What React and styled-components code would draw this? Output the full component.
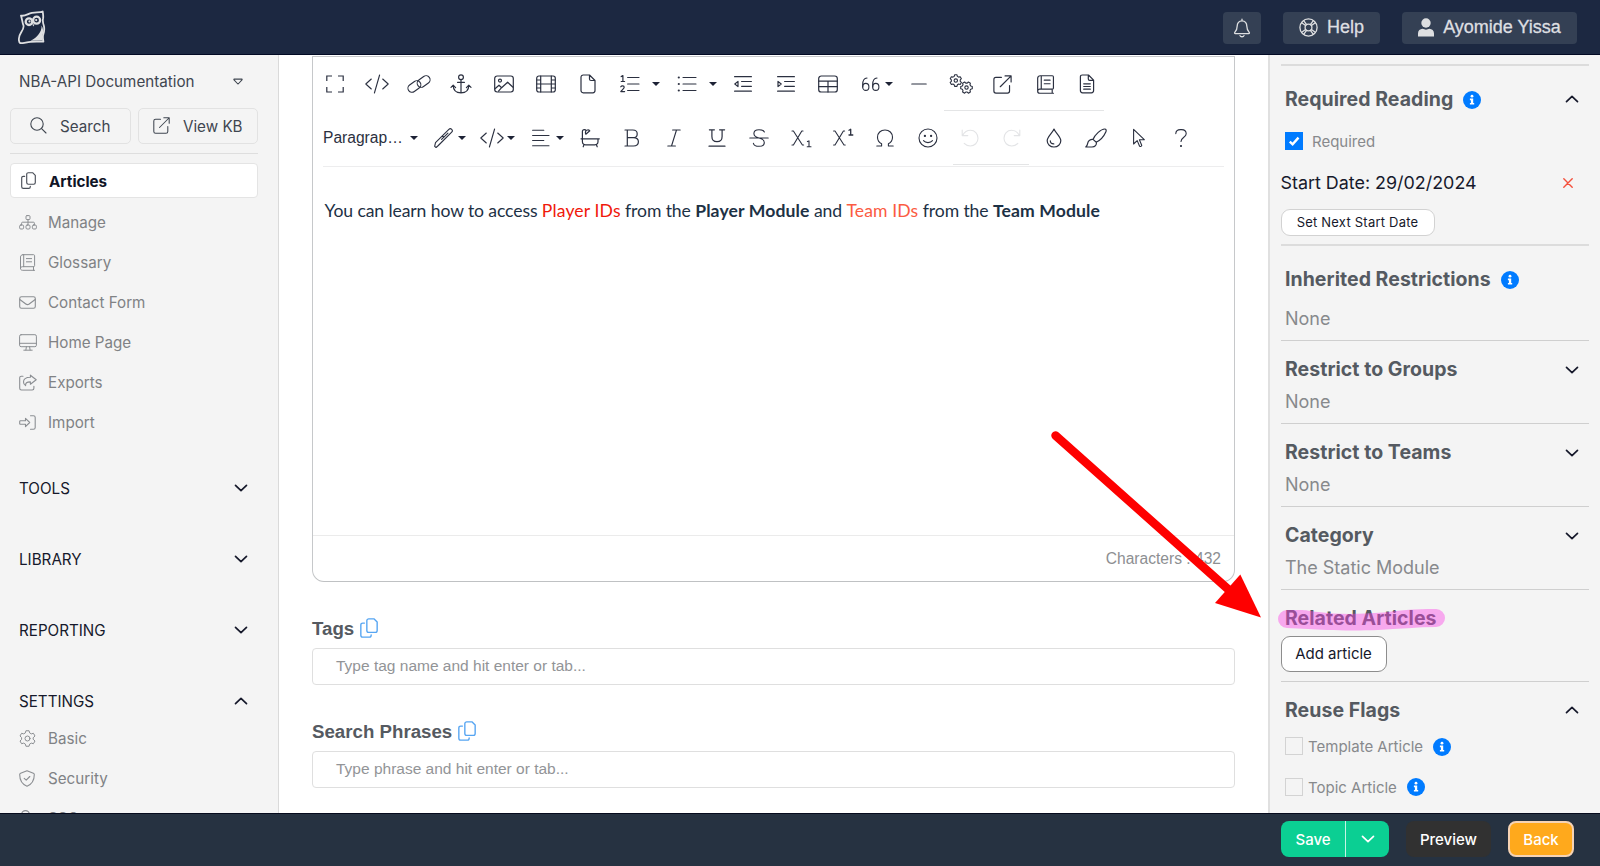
import React from 'react';
import styled, { createGlobalStyle, css } from 'styled-components';

const sans = `Inter, "Liberation Sans", sans-serif`;
const helv = `"Liberation Sans", Arial, sans-serif`;

const GlobalStyle = createGlobalStyle`
  *, *::before, *::after { box-sizing: border-box; }
  html, body { margin: 0; padding: 0; }
  body { font-family: ${sans}; background: #fff; overflow: hidden; }
  button, input { font: inherit; margin: 0; }
  svg { display: block; flex: none; }
`;

/* ---------- icons ---------- */

const Glyph = styled.svg.attrs((p) => ({
  width: p.$w,
  height: p.$h ?? p.$w,
  viewBox: p.viewBox ?? `0 0 ${p.$w} ${p.$h ?? p.$w}`,
  fill: 'none',
  stroke: 'currentColor',
  strokeWidth: p.$sw ?? 1.2,
  strokeLinecap: 'round',
  strokeLinejoin: 'round',
}))``;

function gearPath(cx, cy, outer, inner, offset = 0) {
  const points = [];
  for (let i = 0; i < 6; i += 1) {
    const base = (i * Math.PI) / 3 + offset;
    [[-0.36, inner], [-0.2, outer], [0.2, outer], [0.36, inner]].forEach(([a, r]) => {
      points.push(`${(cx + r * Math.cos(base + a)).toFixed(2)} ${(cy + r * Math.sin(base + a)).toFixed(2)}`);
    });
  }
  return `M${points.join('L')}Z`;
}

const Owl = () => (
  <Glyph $w={28} $h={35} $sw={1.8}>
    <path d="M3 5.600C7.500 6.600 9.600 3.600 14 2.800C18.500 2 21.600 3 24.700 1.500C25 4 25.600 6.200 25 8.800C24.400 11 25 13 25.800 15.500C26.600 18.500 26.400 21.500 25 25.500C24.600 28 25.200 30 25.400 31.600C21 31.800 16 31.600 12.500 31.800C8.500 32.200 5 33.400 2.400 33.200C-.2 31.500.8 26 3.200 22.300C5 19.500 6.300 17.500 5.400 15.200C4.200 12.600 4.200 9 3 5.600Z" />
    <circle cx="11" cy="11.700" r="3.300" strokeWidth="2.300" />
    <circle cx="18.600" cy="10.200" r="3.500" strokeWidth="2.300" />
    <circle cx="11.500" cy="11.400" r="1.100" fill="currentColor" stroke="none" />
    <circle cx="18.200" cy="10.100" r="1.100" fill="currentColor" stroke="none" />
    <path d="M14.200 14.500L15.700 16.500L16.400 14.200Z" fill="currentColor" stroke="none" />
    <path d="M23.500 15.500C24 22 19 27.500 12.500 30.700L24.800 30.600L24.300 26.500C25.800 22 25.300 18.500 23.500 15.500Z" fill="currentColor" stroke="none" />
  </Glyph>
);

const BellIcon = () => (
  <Glyph $w={18} $h={20} $sw={1.3}>
    <path d="M9 1.200V2.800M9 2.800C5.900 2.800 4.200 5.200 4.200 8C4.200 11.500 3.300 12.700 1.800 14.400C1.300 15 1.600 15.700 2.400 15.700H15.600C16.400 15.700 16.700 15 16.200 14.400C14.700 12.700 13.800 11.500 13.800 8C13.800 5.200 12.100 2.800 9 2.800ZM7 17.600C7.500 19.100 10.500 19.100 11 17.600" />
  </Glyph>
);
const HelpRingIcon = () => (
  <Glyph $w={19} $sw={1.3}>
    <circle cx="9.500" cy="9.500" r="8.600" />
    <circle cx="9.500" cy="9.500" r="3.400" />
    <path d="M2.700 4.700L6.600 7.600M4.700 2.700L7.600 6.600M14.300 2.700L11.400 6.600M16.300 4.700L12.400 7.600M16.300 14.300L12.400 11.400M14.300 16.300L11.400 12.400M4.700 16.300L7.600 12.400M2.700 14.300L6.600 11.400" />
  </Glyph>
);
const UserIcon = () => (
  <Glyph $w={16} $h={19}>
    <g fill="currentColor" stroke="none">
      <circle cx="8" cy="5" r="4.700" />
      <path d="M0 18.500V15.500C0 12.500 2 11 4.600 10.800C6.800 11.900 9.200 11.900 11.400 10.800C14 11 16 12.500 16 15.500V18.500Z" />
    </g>
  </Glyph>
);
const TriangleIcon = () => (
  <Glyph $w={10} $h={7} $sw={1.100}>
    <path d="M1.100 1.100H8.900C9.200 1.100 9.200 1.500 9 1.800L5.600 5.500C5.200 5.900 4.800 5.900 4.400 5.500L1 1.800C.8 1.500.8 1.100 1.100 1.100Z" />
  </Glyph>
);
const SearchIcon = () => (
  <Glyph $w={17} $sw={1.100}>
    <circle cx="7" cy="7" r="6.200" />
    <path d="M11.600 11.600L16 16" />
  </Glyph>
);
const ExternalIcon = ({ size = 17 }) => (
  <Glyph $w={size} $sw={1.050} viewBox="0 0 17 17">
    <path d="M7.500 2.200H2.600C1.600 2.200.8 3 .8 4V14.400C.8 15.400 1.600 16.200 2.600 16.200H13C14 16.200 14.800 15.400 14.800 14.400V9.500M10.800.8H16.200V6.200M16 1L6.500 10.500" />
  </Glyph>
);
const CopyIcon = ({ w = 15, h = 17 }) => (
  <Glyph $w={w} $h={h} $sw={1.150} viewBox="0 0 15 17" preserveAspectRatio="none">
    <path d="M7.300.7H11.600L14.300 3.400V10.600C14.300 11.500 13.700 12.200 12.800 12.200H7.300C6.400 12.200 5.700 11.500 5.700 10.600V2.300C5.700 1.400 6.400.7 7.300.7ZM3.700 4.300H2.300C1.400 4.300.7 5 .7 5.900V14.700C.7 15.600 1.400 16.300 2.300 16.300H7.800C8.700 16.300 9.300 15.600 9.300 14.700V14.300" />
  </Glyph>
);
const SitemapIcon = () => (
  <Glyph $w={18} $h={15} $sw={1}>
    <rect x="7" y=".6" width="4" height="4" rx="1" />
    <rect x=".6" y="10" width="4" height="4" rx="1.200" />
    <rect x="7" y="10" width="4" height="4" rx="1.200" />
    <rect x="13.400" y="10" width="4" height="4" rx="1.200" />
    <path d="M9 4.600V10M2.600 10V8.200Q2.600 7.200 3.600 7.200H14.400Q15.400 7.200 15.400 8.200V10" />
  </Glyph>
);
const BookIcon = ({ size = 17, sw = 1 }) => (
  <Glyph $w={size} $sw={sw} viewBox="0 0 17 17">
    <path d="M3.800.7H14.600C15.200.7 15.600 1.100 15.600 1.700V11.700C15.600 12.300 15.200 12.700 14.600 12.700H3.400C2.300 12.700 1.500 13.500 1.500 14.500C1.500 15.500 2.300 16.300 3.400 16.300H15.600M1.500 14.500V3C1.500 1.700 2.500.7 3.800.7M4.700.7V12.700M14.500 12.700V16.300M7.400 4.600H12.600M7.400 7.800H12.600" />
  </Glyph>
);
const MailIcon = () => (
  <Glyph $w={17} $h={13} $sw={1.100}>
    <rect x=".7" y=".7" width="15.600" height="11.600" rx="1.800" />
    <path d="M.8 3.500L6.800 8C7.900 8.800 9.100 8.800 10.200 8L16.200 3.500" />
  </Glyph>
);
const DesktopIcon = () => (
  <Glyph $w={18} $h={17} $sw={1}>
    <rect x=".6" y=".7" width="16.800" height="12" rx="1.500" />
    <path d="M.6 9.300H17.400M7.400 12.700L6.900 16M10.600 12.700L11.100 16M4.800 16.200H13.200" />
  </Glyph>
);
const ExportIcon = () => (
  <Glyph $w={18} $h={17} $sw={1.100}>
    <path d="M4 2.200H2.400C1.400 2.200.7 2.900.7 3.900V14.300C.7 15.300 1.400 16 2.400 16H13.200C14.200 16 14.900 15.300 14.900 14.300V12.200M11.400 1.200V3.300C6.500 3.300 4.500 5.300 4.500 7.900C4.500 9.500 5.400 10.800 6.600 11.600C6.400 9 7.600 7.900 11.400 7.900V10.200L17.200 5.700L11.400 1.200" />
  </Glyph>
);
const ImportIcon = () => (
  <Glyph $w={17} $h={15} $sw={1.100}>
    <path d="M11.500.8H14.400C15.500.8 16.200 1.500 16.200 2.600V12.400C16.200 13.500 15.500 14.200 14.400 14.200H11.500M6.500 3.300L10.700 7.500L6.500 11.700V9.200H1.500C1 9.200.7 8.900.7 8.400V6.600C.7 6.100 1 5.800 1.500 5.800H6.500Z" />
  </Glyph>
);
const GearIcon = () => (
  <Glyph $w={17} $sw={1}>
    <path d={gearPath(8.500, 8.500, 7.900, 6, Math.PI / 6)} />
    <circle cx="8.500" cy="8.500" r="2.500" />
  </Glyph>
);
const ShieldIcon = () => (
  <Glyph $w={16} $h={17} $sw={1.100}>
    <path d="M8 .7L14.400 3.200C15 3.500 15.300 4 15.300 4.500C15.300 10 13 14.200 8 16.200C3 14.200.7 10 .7 4.500C.7 4 1 3.500 1.600 3.200ZM5.200 8.300L7.200 10.200L10.800 6.500" />
  </Glyph>
);
const KeyIcon = () => (
  <Glyph $w={16} $sw={1.100}>
    <circle cx="6.500" cy="4.500" r="3.900" />
    <path d="M6.500 8.400V15.500M6.500 13H10" />
  </Glyph>
);
const Chevron = ({ up }) => (
  <Glyph $w={14} $h={8} $sw={1.7}>
    <path d={up ? 'M1.500 6.700L7 1.300L12.500 6.700' : 'M1.500 1.300L7 6.700L12.500 1.300'} />
  </Glyph>
);
const InfoIcon = () => (
  <Glyph $w={18}>
    <circle cx="9" cy="9" r="9" fill="#007bff" stroke="none" />
    <g fill="#fff" stroke="none">
      <circle cx="9" cy="5.200" r="1.400" />
      <path d="M6.900 7.600H10.200V12H11.200V13.600H6.900V12H7.900V9.200H6.900Z" />
    </g>
  </Glyph>
);
const CloseIcon = () => (
  <Glyph $w={10} $sw={1.400}>
    <path d="M.8.8L9.200 9.200M9.200.8L.8 9.200" />
  </Glyph>
);
const CheckIcon = () => (
  <Glyph $w={18} $sw={2.400}>
    <path d="M4.800 9.600L7.600 12.300L13.500 5.600" strokeLinecap="butt" strokeLinejoin="miter" />
  </Glyph>
);

/* toolbar icons share a 24x20 box centred in the tool cell */
const T = ({ children, sw = 1.100 }) => (
  <Glyph $w={24} $h={20} $sw={sw}>{children}</Glyph>
);
const toolIcons = {
  expand: <T sw={1.200}><path d="M3.800 7V2H9M15 2H20.200V7M20.200 13V18H15M9 18H3.800V13" strokeLinejoin="miter" strokeLinecap="butt" /></T>,
  code: <T><path d="M6.300 5L.8 10L6.300 15M17.700 5L23.200 10L17.700 15M14.600 1L9.400 19" /></T>,
  link: <T><g transform="rotate(-36 12 10)"><rect x="-.2" y="5.300" width="14" height="8" rx="4" /><rect x="10.200" y="6.700" width="14" height="8" rx="4" /></g></T>,
  anchor: <T sw={1.200}><circle cx="12" cy="3.200" r="2.400" /><path d="M12 5.600V18.800M8.600 8.400H15.400M2 13.400L4.200 11.200L6.600 13.600M22 13.400L19.800 11.200L17.400 13.600M4.200 11.500C4.300 16.300 7.200 18.800 12 18.800C16.800 18.800 19.700 16.300 19.800 11.500" /></T>,
  image: <T sw={1.200}><rect x="2.700" y="2" width="18.600" height="16" rx="2.400" /><circle cx="8" cy="6.600" r="1.500" /><path d="M3 14.800L7 11.200L9.600 13.700L15.600 8.200L21 13.200M9.600 13.700L6.500 17.200" /></T>,
  video: <T sw={1.200}><rect x="2.700" y="2" width="18.600" height="16" rx="2.200" /><path d="M6.700 2V18M17.300 2V18M6.700 10H17.300M2.700 6H6.700M2.700 10H6.700M2.700 14H6.700M17.300 6H21.300M17.300 10H21.300M17.300 14H21.300" /></T>,
  file: <T sw={1.200}><path d="M7.200 1H13.500L19 6.500V16.600C19 17.900 18.100 18.800 16.800 18.800H7.200C5.900 18.800 5 17.900 5 16.600V3.200C5 1.900 5.900 1 7.200 1ZM13.500 1V5Q13.500 6.500 15 6.500H19" /></T>,
  ol: <T><path d="M9.600 3.500H21M9.600 10H21M9.600 16.500H21" /><path d="M3.200 2.600L4.900 1.600V7.500M3.200 7.500H6.600M2.800 12.800C3.400 11.700 6.200 11.500 6.200 13.300C6.200 14.600 4 16 2.800 17.600H6.600" strokeWidth="1.200" /></T>,
  ul: <T><path d="M8 3.500H21M8 10H21M8 16.500H21" /><g fill="currentColor" stroke="none"><circle cx="3.800" cy="3.500" r="1.100" /><circle cx="3.800" cy="10" r="1.100" /><circle cx="3.800" cy="16.500" r="1.100" /></g></T>,
  outdent: <T sw={1.200}><path d="M3.600 2.700H20.400M10.600 7.500H20.400M10.600 12.300H20.400M3.600 17.200H20.400M7 7.400V12.600L3.800 10Z" /></T>,
  indent: <T sw={1.200}><path d="M3.600 2.700H20.400M10.600 7.500H20.400M10.600 12.300H20.400M3.600 17.200H20.400M4 7.400V12.600L7.200 10Z" /></T>,
  table: <T sw={1.200}><rect x="2.700" y="2" width="18.600" height="16" rx="2.600" /><path d="M2.700 7.200H21.300M2.700 12.600H21.300M12 7.200V18" /></T>,
  quote: <T><path d="M9 4C6.200 4.200 4.700 6.500 4.700 10.500V13M19 4C16.200 4.200 14.700 6.500 14.700 10.500V13" /><ellipse cx="7.800" cy="12.900" rx="3.100" ry="3.500" /><ellipse cx="17.800" cy="12.900" rx="3.100" ry="3.500" /></T>,
  minus: <T sw={1.200}><path d="M4.800 10H19.200" /></T>,
  gears: <T><path d={gearPath(6.800, 6.600, 5.900, 4.500, Math.PI / 6)} /><circle cx="6.800" cy="6.600" r="1.700" /><path d={gearPath(17.500, 13.600, 5.900, 4.500, 0)} /><circle cx="17.500" cy="13.600" r="1.700" /></T>,
  external: <ExternalIcon size={19} />,
  book: <BookIcon size={19} sw={1.050} />,
  doc: <T sw={1.200}><path d="M7.200 1H13.500L18.600 6.200V16.600C18.600 17.900 17.700 18.800 16.400 18.800H7.600C6.300 18.800 5.400 17.900 5.400 16.600V2.800C5.400 1.700 6.200 1 7.200 1ZM13.300 1V5Q13.300 6.400 14.700 6.400H18.600M8.700 9.800H15.300M8.700 12.500H15.300M8.700 15.200H15.300" /></T>,
  pen: <T><g transform="rotate(-45 12 10)"><path d="M.2 10L3.400 8H22.300A2 2 0 0 1 22.300 12H3.400L.4 11.800ZM10 10H19M13 8V10" /></g></T>,
  align: <T><path d="M3.600 2.300H14.800M3.600 7.500H20M3.600 12.500H14.800M3.600 17.700H20" /></T>,
  bath: <T sw={1.200}><path d="M3 10.800H21.300M4.400 10.800V3.600Q4.400 1.600 6.400 1.600Q7.600 1.600 8.200 2.600M7.800 6.200L11.800 2.800C10.600 1.500 8.400 1.800 7.700 3.300C7.300 4.300 7.300 5.300 7.800 6.200ZM4.400 10.800V13.600Q4.400 16.800 7.600 16.800H16.800Q20 16.800 20 13.600V10.800M6 16.800L5.200 18.800M18.400 16.800L19.200 18.800" /></T>,
  bold: <T sw={1.200}><path d="M5 2H12.800C15.400 2 17.200 3.600 17.200 5.900C17.200 8.200 15.400 9.700 12.800 9.700H7.300M12.800 9.700H13.400C16.300 9.700 18.400 11.300 18.400 13.800C18.400 16.300 16.300 18 13.400 18H5M7.300 2V18" /></T>,
  italic: <T><path d="M10.600 2H18.200M5.800 18H13.400M14.500 2L9.500 18" /></T>,
  underline: <T sw={1.200}><path d="M4.400 1.800H9.400M14.600 1.800H19.600M6.900 1.800V8.500C6.900 11.800 8.800 13.700 12 13.700C15.200 13.700 17.100 11.800 17.100 8.500V1.800M4 18.200H20" /></T>,
  strike: <T><path d="M2.800 10H21.200M17.400 4C16.500 2.300 14.500 1.700 12 1.700C9 1.700 6.900 3.200 6.900 5.600C6.900 8 8.800 9.300 12 10C15.500 10.800 17.300 12 17.300 14.400C17.300 16.800 15.200 18.300 12 18.300C9 18.300 6.900 17.300 6.400 15.300" /></T>,
  sub: <T><path d="M3 3H4.400L13.400 17H14.600M14 3H12.800L4.400 17H3" /><path d="M18.400 13.600L20 12.900V18.800M18.200 18.800H22" /></T>,
  sup: <T><path d="M2.600 3H4L13 17H14.200M13.600 3H12.400L4 17H2.600" /><path d="M18 2.200L19.700 1.300V7M18 7H21.800" strokeWidth="1.300" /></T>,
  omega: <T><path d="M3.800 18H8.600V15.800C5.900 14.400 4.500 12 4.500 9.200C4.500 4.900 7.700 2 12 2C16.300 2 19.500 4.900 19.500 9.200C19.500 12 18.100 14.400 15.400 15.800V18H20.200" /></T>,
  smile: <T><circle cx="12" cy="10" r="9" /><path d="M7.500 12.700C9.600 15.300 14.400 15.300 16.500 12.700" /><circle cx="8.900" cy="7.900" r=".6" fill="currentColor" /><circle cx="15.100" cy="7.900" r=".6" fill="currentColor" /></T>,
  undo: <T><path d="M4.200 2V7.600H9.800M4.600 7.400C6.400 4 9.200 2.300 12.500 2.300C16.800 2.300 20 5.800 20 10.200C20 14.600 16.600 18 12.300 18C9.800 18 7.700 17 6.200 15.400" /></T>,
  redo: <T><path d="M19.800 2V7.600H14.200M19.400 7.400C17.600 4 14.800 2.300 11.500 2.300C7.200 2.300 4 5.800 4 10.200C4 14.600 7.400 18 11.700 18C14.200 18 16.300 17 17.800 15.400" /></T>,
  drop: <T sw={1.200}><path d="M12 1C10.500 5 5.200 8.700 5.200 12.800C5.200 16.500 8.200 19 12 19C15.800 19 18.800 16.500 18.800 12.800C18.800 8.700 13.500 5 12 1ZM8.300 12.800C8.300 14.700 9.800 15.900 11.800 15.900" /></T>,
  brush: <T sw={1.200}><path d="M9 11.400C11 6.500 17 1 20.700 1C22.300 1 22.500 2.600 21.800 4C20 8 16 12.500 12.200 14.200M9 11.400L12.300 14.300C13 17 11 19 8 19H1.800C3.400 17.500 3.500 16.500 3.800 14.800C4.200 12.700 6.500 11 9 11.400" /></T>,
  pointer: <T><path d="M6.600 1.300V16L10.200 12.600L12.600 18.200C13.400 19 15 18.200 14.700 17.200L12.400 11.700H17.300Z" /></T>,
  question: <T><path d="M6.800 5.600C6.900 3.200 8.700 1.600 11.400 1.600H12.600C15.300 1.600 17.200 3.400 17.200 5.800C17.200 9.300 12 9.200 12 13.500" /><circle cx="12" cy="18" r=".5" fill="currentColor" /></T>,
};

/* ---------- shared pieces ---------- */

const Label = styled.span`
  white-space: nowrap;
`;

const Screen = styled.div`
  position: relative;
  width: 1600px;
  height: 866px;
  overflow: hidden;
  display: flex;
  flex-direction: column;
`;

const Header = styled.header`
  height: 55px;
  flex: none;
  background: #1c2841;
  border-bottom: 1px solid #020a24;
  color: #dedfe1;
  display: flex;
  align-items: center;
  padding: 0 23px 0 18px;
  font-family: ${helv};
  font-size: 18px;
`;

const HeaderButton = styled.button`
  height: 32px;
  width: ${(p) => p.$width}px;
  margin: 1px 0 0 ${(p) => p.$gap ?? 0}px;
  border: 0;
  border-radius: 4px;
  padding: 0;
  background: #344054;
  color: inherit;
  display: flex;
  align-items: center;
  justify-content: center;
  gap: ${(p) => p.$inner ?? 8}px;
  -webkit-text-stroke: 0.3px currentColor;
  &:first-of-type { margin-left: auto; }
`;

const Body = styled.div`
  flex: none;
  height: 758px;
  display: flex;
  overflow: hidden;
`;

/* ---------- left navigation ---------- */

const Sidebar = styled.nav`
  width: 279px;
  flex: none;
  background: #f4f4f4;
  border-right: 1px solid #dadada;
  padding: 0 20px 0 10px;
  font-size: 15.2px;
  overflow: hidden;
`;

const KbPicker = styled.div`
  height: 53px;
  padding: 0 15px 0 9px;
  display: flex;
  align-items: center;
  justify-content: space-between;
  color: #3f4650;
`;

const QuickActions = styled.div`
  display: grid;
  grid-template-columns: 1fr 1fr;
  gap: 7px;
`;

const QuickButton = styled.button`
  height: 36px;
  border: 1px solid #e2e2e2;
  border-radius: 5px;
  background: #f4f4f4;
  color: #3f4650;
  padding: 0;
  display: flex;
  align-items: center;
  justify-content: center;
  gap: 13px;
  svg { margin-top: -1px; }
`;

const Rule = styled.div`
  height: 1px;
  margin-top: 9px;
  background: #dedede;
`;

const ActiveItem = styled.a`
  height: 35px;
  margin-top: 9px;
  padding: 1px 0 0 10px;
  display: flex;
  align-items: center;
  gap: 13px;
  background: #fff;
  border: 1px solid #e4e4e4;
  border-radius: 4px;
  color: #101426;
  font-weight: 700;
  svg { color: #4a4f58; margin-top: -1px; }
`;

const NavList = styled.div`
  margin-top: ${(p) => p.$top ?? 0}px;
`;

const NavItem = styled.a`
  height: 40px;
  padding-left: 9px;
  display: flex;
  align-items: center;
  color: #808285;
`;

const NavIcon = styled.span`
  width: 29px;
  display: flex;
  color: #8b8e92;
`;

const GroupHeader = styled.div`
  height: 35px;
  margin-top: ${(p) => p.$top ?? 36}px;
  padding: 1px 10.5px 0 9px;
  display: flex;
  align-items: center;
  justify-content: space-between;
  color: #16192b;
`;

/* ---------- editor ---------- */

const Main = styled.main`
  flex: 1;
  background: #fff;
  padding: 1px 33px 0;
  font-family: ${helv};
`;

const Editor = styled.section`
  height: 526px;
  border: 1px solid #c6c8ca;
  border-bottom-color: #bfc1c3;
  border-radius: 0 0 12px 12px;
  display: flex;
  flex-direction: column;
`;

const Toolbar = styled.div`
  height: 110px;
`;

const ToolRow = styled.div`
  height: 54px;
  padding-left: ${(p) => p.$indent ?? 0}px;
  display: flex;
  align-items: center;
`;

const ToolGroup = styled.div`
  display: flex;
  align-items: center;
  height: 54px;
  ${(p) => p.$marked && css`
    background: linear-gradient(#e4e5e6, #e4e5e6) center bottom / calc(100% - 8px) 1px no-repeat;
  `}
`;

const Tool = styled.button`
  width: 42.2px;
  height: 40px;
  border: 0;
  padding: 0;
  background: none;
  color: ${(p) => (p.$faded ? '#e3e4e6' : '#2b3040')};
  display: flex;
  align-items: center;
  justify-content: center;
`;

const DropTool = styled(Tool)`
  width: ${(p) => p.$width}px;
  justify-content: flex-start;
  padding-left: 9px;
`;

const Caret = styled.i`
  border: 4px solid transparent;
  border-top: 4.5px solid #1d2235;
  border-bottom: 0;
  margin-left: ${(p) => p.$gap}px;
`;

const ParagraphPicker = styled(DropTool)`
  padding-left: 10px;
  font-size: 15.6px;
`;

const ToolbarRule = styled.div`
  height: 1px;
  margin: 1px 10px 0;
  background: #ededee;
`;

const Document = styled.article`
  flex: 1;
  padding: 30px 11.5px;
  font-family: Lato, sans-serif;
  font-size: 17.58px;
  line-height: 27px;
  letter-spacing: -0.1px;
  color: #1d3145;
  b { letter-spacing: 0.12px; }
`;

const DocLink = styled.a`
  letter-spacing: 0.12px;
  color: ${(p) => p.$tone};
`;

const StatusBar = styled.div`
  height: 46px;
  border-top: 1px solid #ebebeb;
  display: flex;
  align-items: center;
  justify-content: flex-end;
  padding-right: 13px;
  color: #8d8f92;
  font-size: 15.6px;
`;

const Field = styled.div`
  margin-top: 31px;
`;

const FieldTitle = styled.div`
  height: 31px;
  display: flex;
  align-items: center;
  gap: 6px;
  font-size: 18.7px;
  font-weight: 700;
  color: #555a61;
  svg { color: #56a5f2; margin-top: -1px; }
`;

const TagBox = styled.div`
  height: 37px;
  margin-top: 4px;
  border: 1px solid #dfdfdf;
  border-radius: 4px;
  padding: 0 0 1px 23px;
  display: flex;
  align-items: center;
  color: #929497;
  font-size: 15.5px;
`;

/* ---------- right settings panel ---------- */

const Panel = styled.aside`
  width: 332px;
  flex: none;
  background: #f4f4f4;
  border-left: 2px solid #e0e0e0;
  padding: 0 11px 0 10.5px;
`;

const PanelSection = styled.section`
  padding: ${(p) => p.$top ?? 9}px 0 ${(p) => p.$bottom ?? 9}px;
  border-bottom: ${(p) => p.$line ?? 1}px solid ${(p) => (p.$line === 2 ? '#dcdcdc' : '#cfcfcf')};
`;

const PanelTitle = styled.h3`
  position: relative;
  height: ${(p) => p.$h ?? 39}px;
  margin: 0;
  padding: 0 10.5px 0 4.5px;
  display: flex;
  align-items: center;
  gap: 10px;
  font-size: 19.5px;
  line-height: 23px;
  font-weight: 700;
  letter-spacing: 0.04px;
  color: #555a61;
`;

const Toggle = styled.span`
  margin: ${(p) => p.$shift ?? 0}px 0 0 auto;
  color: #16192b;
`;

const Value = styled.div`
  height: ${(p) => p.$h ?? 25}px;
  padding-left: 4.5px;
  display: flex;
  align-items: center;
  font-size: 18px;
  color: #87898c;
`;

const CheckRow = styled.label`
  height: ${(p) => p.$h}px;
  padding: 0 0 1px 4.5px;
  display: flex;
  align-items: center;
  gap: ${(p) => p.$gap}px;
  font-size: 15px;
  color: #87898c;
  ${Label} + svg { margin-left: 5px; }
`;

const Box = styled.span`
  width: 18px;
  height: 18px;
  margin-top: -1px;
  color: #fff;
  background: ${(p) => (p.$on ? '#007bff' : '#f4f4f4')};
  border: ${(p) => (p.$on ? 0 : '1px solid #d3d3d3')};
`;

const DateRow = styled.div`
  height: 46px;
  margin-top: 9px;
  padding: 0 16px 1px 0;
  display: flex;
  align-items: center;
  justify-content: space-between;
  font-size: 17.9px;
  color: #16192b;
  svg { color: #f4503c; }
`;

const PanelButton = styled.button`
  display: flex;
  align-items: center;
  justify-content: center;
  padding: 0 0 1px;
  width: ${(p) => p.$width}px;
  height: ${(p) => p.$height}px;
  margin-top: ${(p) => p.$top ?? 0}px;
  background: #fff;
  border: 1px solid ${(p) => p.$edge};
  border-radius: 9px;
  font-size: ${(p) => p.$size}px;
  letter-spacing: ${(p) => p.$track ?? 0}px;
  color: #16192b;
`;

const Marker = styled.svg`
  position: absolute;
  left: -3px;
  top: 8px;
`;

/* ---------- bottom bar ---------- */

const Footer = styled.footer`
  flex: 1;
  background: #263241;
  border-top: 1px solid #060b1d;
  display: flex;
  align-items: center;
  padding: 0 26px 2px 1281px;
  font-size: 15px;
  font-weight: 500;
  color: #fff;
`;

const SplitButton = styled.div`
  width: 108px;
  height: 36px;
  display: flex;
  border-radius: 8px;
  overflow: hidden;
  background: #0bcf93;
`;

const SplitPart = styled.button`
  width: ${(p) => p.$width}px;
  border: 0;
  padding: 0;
  background: none;
  color: inherit;
  display: flex;
  align-items: center;
  justify-content: center;
  & + & { border-left: 1px solid #c6f3e4; }
`;

const FooterButton = styled.button`
  width: ${(p) => p.$width}px;
  height: 36px;
  margin-left: ${(p) => p.$gap}px;
  padding: 0;
  border: ${(p) => (p.$edge ? `2px solid ${p.$edge}` : 0)};
  border-radius: 8px;
  background: ${(p) => p.$bg};
  color: inherit;
`;

const Arrow = styled.svg`
  position: absolute;
  left: 1040px;
  top: 425px;
  pointer-events: none;
`;

/* ---------- data ---------- */

const navItems = [
  ['Manage', <SitemapIcon />],
  ['Glossary', <BookIcon />],
  ['Contact Form', <MailIcon />],
  ['Home Page', <DesktopIcon />],
  ['Exports', <ExportIcon />],
  ['Import', <ImportIcon />],
];

const settingsItems = [
  ['Basic', <GearIcon />],
  ['Security', <ShieldIcon />],
  ['SSO', <KeyIcon />],
];

const NavEntries = ({ items }) => items.map(([name, icon]) => (
  <NavItem key={name}>
    <NavIcon>{icon}</NavIcon>
    <Label>{name}</Label>
  </NavItem>
));

const Tools = ({ names, faded }) => names.map((name) => (
  <Tool key={name} $faded={faded} aria-label={name}>{toolIcons[name]}</Tool>
));

const Drop = ({ name, width, gap }) => (
  <DropTool $width={width} aria-label={name}>
    {toolIcons[name]}
    <Caret $gap={gap} />
  </DropTool>
);

export default function App() {
  return (
    <Screen>
      <GlobalStyle />
      <Header>
        <Owl />
        <HeaderButton $width={38}><BellIcon /></HeaderButton>
        <HeaderButton $width={97} $gap={22} $inner={9}><HelpRingIcon /><Label>Help</Label></HeaderButton>
        <HeaderButton $width={175} $gap={22} $inner={9}><UserIcon /><Label>Ayomide Yissa</Label></HeaderButton>
      </Header>

      <Body>
        <Sidebar>
          <KbPicker><Label>NBA-API Documentation</Label><TriangleIcon /></KbPicker>
          <QuickActions>
            <QuickButton><SearchIcon /><Label>Search</Label></QuickButton>
            <QuickButton><ExternalIcon /><Label>View KB</Label></QuickButton>
          </QuickActions>
          <Rule />
          <ActiveItem><CopyIcon /><Label>Articles</Label></ActiveItem>
          <NavList $top={4}><NavEntries items={navItems} /></NavList>
          <GroupHeader $top={28}><Label>TOOLS</Label><Chevron /></GroupHeader>
          <GroupHeader><Label>LIBRARY</Label><Chevron /></GroupHeader>
          <GroupHeader><Label>REPORTING</Label><Chevron /></GroupHeader>
          <GroupHeader><Label>SETTINGS</Label><Chevron up /></GroupHeader>
          <NavList><NavEntries items={settingsItems} /></NavList>
        </Sidebar>

        <Main>
          <Editor>
            <Toolbar>
              <ToolRow $indent={0.8}>
                <Tools names={['expand', 'code', 'link', 'anchor', 'image', 'video', 'file']} />
                <Drop name="ol" width={56.6} gap={10} />
                <Drop name="ul" width={56.6} gap={10} />
                <Tools names={['outdent', 'indent', 'table']} />
                <Drop name="quote" width={48.6} gap={3} />
                <Tools names={['minus']} />
                <ToolGroup $marked><Tools names={['gears', 'external', 'book', 'doc']} /></ToolGroup>
              </ToolRow>
              <ToolRow>
                <ParagraphPicker $width={109}><Label>Paragrap…</Label><Caret $gap={7} /></ParagraphPicker>
                <Drop name="pen" width={49} gap={3} />
                <Drop name="code" width={49} gap={3} />
                <Drop name="align" width={49} gap={3} />
                <Tools names={['bath', 'bold', 'italic', 'underline', 'strike', 'sub', 'sup', 'omega', 'smile']} />
                <ToolGroup $marked><Tools faded names={['undo', 'redo']} /></ToolGroup>
                <Tools names={['drop', 'brush', 'pointer', 'question']} />
              </ToolRow>
              <ToolbarRule />
            </Toolbar>
            <Document>
              <Label>You can learn how to access <DocLink $tone="#f0180a">Player IDs</DocLink> from the <b>Player Module</b> and <DocLink $tone="#fb5b42">Team IDs</DocLink> from the <b>Team Module</b></Label>
            </Document>
            <StatusBar><Label>Characters : 432</Label></StatusBar>
          </Editor>
          <Field>
            <FieldTitle><Label>Tags</Label><CopyIcon w={18} h={20} /></FieldTitle>
            <TagBox><Label>Type tag name and hit enter or tab...</Label></TagBox>
          </Field>
          <Field>
            <FieldTitle><Label>Search Phrases</Label><CopyIcon w={18} h={20} /></FieldTitle>
            <TagBox><Label>Type phrase and hit enter or tab...</Label></TagBox>
          </Field>
        </Main>

        <Panel>
          <PanelSection $top={9} $bottom={0} $line={2} />
          <PanelSection $top={0} $bottom={8} $line={2}>
            <PanelTitle $h={67}><Label>Required Reading</Label><InfoIcon /><Toggle $shift={-2}><Chevron up /></Toggle></PanelTitle>
            <CheckRow $h={18} $gap={9}><Box $on><CheckIcon /></Box><Label>Required</Label></CheckRow>
            <DateRow><Label>Start Date: 29/02/2024</Label><CloseIcon /></DateRow>
            <PanelButton $width={154} $height={27} $top={3} $size={13} $track={0.22} $edge="#d2d2d2"><Label>Set Next Start Date</Label></PanelButton>
          </PanelSection>
          <PanelSection $top={14} $bottom={3}>
            <PanelTitle><Label>Inherited Restrictions</Label><InfoIcon /></PanelTitle>
            <Value $h={38}><Label>None</Label></Value>
          </PanelSection>
          <PanelSection>
            <PanelTitle><Label>Restrict to Groups</Label><Toggle><Chevron /></Toggle></PanelTitle>
            <Value><Label>None</Label></Value>
          </PanelSection>
          <PanelSection>
            <PanelTitle><Label>Restrict to Teams</Label><Toggle><Chevron /></Toggle></PanelTitle>
            <Value><Label>None</Label></Value>
          </PanelSection>
          <PanelSection>
            <PanelTitle><Label>Category</Label><Toggle><Chevron /></Toggle></PanelTitle>
            <Value><Label>The Static Module</Label></Value>
          </PanelSection>
          <PanelSection $top={10}>
            <PanelTitle $h={36}>
              <Label>Related Articles</Label>
              <Marker width="168" height="24" viewBox="0 0 168 24">
                <path d="M9 2H22C28 2 32 3 40 4C60 7 90 6 110 4C125 2 135 1 158 1A9 9 0 0 1 158 19C140 19 120 21 100 22C70 23 45 22 30 21L9 20A9 9 0 0 1 9 2Z" fill="rgba(250, 62, 228, 0.42)" />
              </Marker>
            </PanelTitle>
            <PanelButton $width={106} $height={36} $size={15} $edge="#8d8d8d"><Label>Add article</Label></PanelButton>
          </PanelSection>
          <PanelSection $top={12} $bottom={0} $line={0}>
            <PanelTitle $h={33}><Label>Reuse Flags</Label><Toggle $shift={-2}><Chevron up /></Toggle></PanelTitle>
            <CheckRow $h={40.5} $gap={5}><Box /><Label>Template Article</Label><InfoIcon /></CheckRow>
            <CheckRow $h={40.5} $gap={5}><Box /><Label>Topic Article</Label><InfoIcon /></CheckRow>
          </PanelSection>
        </Panel>
      </Body>

      <Footer>
        <SplitButton>
          <SplitPart $width={64}><Label>Save</Label></SplitPart>
          <SplitPart $width={44}><Chevron /></SplitPart>
        </SplitButton>
        <FooterButton $width={85} $gap={17} $bg="#313131"><Label>Preview</Label></FooterButton>
        <FooterButton $width={66} $gap={17} $bg="#ffa91c" $edge="#f6d3b4"><Label>Back</Label></FooterButton>
      </Footer>

      <Arrow width="230" height="200" viewBox="1040 425 230 200">
        <path d="M1055.500 435.500L1229 590" stroke="#fe0000" strokeWidth="8.500" strokeLinecap="round" />
        <path d="M1261 617.500L1240.300 574.500L1215 603Z" fill="#fe0000" />
      </Arrow>
    </Screen>
  );
}
